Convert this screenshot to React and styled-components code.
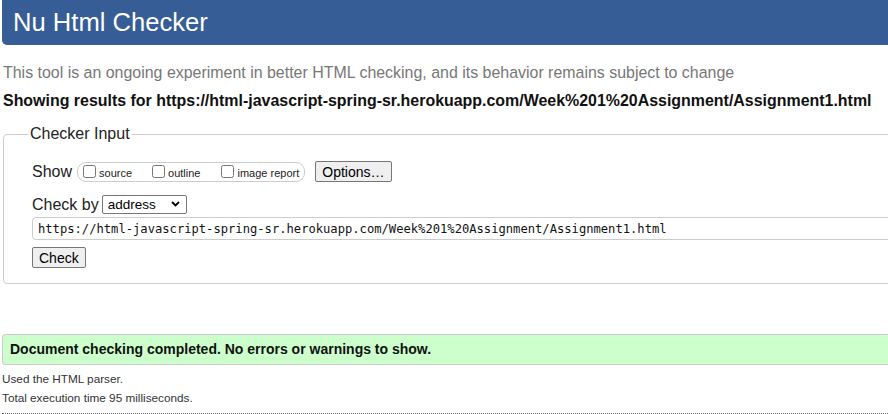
import styled, { createGlobalStyle } from 'styled-components';

const GlobalStyle = createGlobalStyle`
  html, body {
    margin: 0;
    padding: 0;
    background: #fff;
    overflow: hidden;
  }
  body {
    font-family: "Liberation Sans", Arial, sans-serif;
    color: #000;
  }
`;

const Page = styled.div`
  width: 1000px;
  padding-left: 2px;
`;

const Banner = styled.h1`
  margin: 0;
  height: 45px;
  padding-left: 11px;
  background: #365d95;
  color: #fff;
  font-size: 25.6px;
  font-weight: normal;
  line-height: 45px;
  border-radius: 0 0 0 5px;
`;

const Intro = styled.p`
  margin: 18px 0 0 1px;
  color: #777;
  font-size: 15.95px;
  line-height: 20px;
`;

const Results = styled.p`
  margin: 8px 0 0 1px;
  font-size: 15.95px;
  font-weight: bold;
  line-height: 20px;
  color: #111;
`;

const Fieldset = styled.fieldset`
  margin: 14px 0 0 1px;
  padding: 18px 0 15px 28px;
  border: 1px solid #ccc;
  border-radius: 4px;
  min-inline-size: 0;
`;

const Legend = styled.legend`
  margin-left: -4px;
  padding: 0 2px;
  font-size: 16px;
  color: #222;
`;

const Row = styled.div`
  display: flex;
  align-items: center;
  margin-top: ${(p) => p.top || 0}px;
  height: 21px;
`;

const Caption = styled.span`
  font-size: 16px;
  color: #222;
`;

const Group = styled.div`
  display: flex;
  align-items: center;
  height: 18px;
  margin-left: 5px;
  padding: 0 5px;
  border: 1px solid #ccc;
  border-radius: 9px;
`;

const Option = styled.label`
  display: flex;
  align-items: center;
  margin-right: ${(p) => p.space || 0}px;
  font-size: 11px;
  color: #222;

  input {
    width: 13px;
    height: 13px;
    margin: 0 3px 0 0;
  }
  span {
    padding-top: 3px;
  }
`;

const Button = styled.button`
  height: 21px;
  padding: 0 6px;
  background: #efefef;
  border: 1px solid #767676;
  border-radius: 2px;
  font-family: "Liberation Sans", Arial, sans-serif;
  font-size: 14px;
  color: #000;
  margin-left: ${(p) => p.left || 0}px;
`;

const SelectWrap = styled.div`
  position: relative;
  margin-left: 3px;
`;

const Select = styled.select`
  appearance: none;
  width: 85px;
  height: 19px;
  padding: 0 0 0 5px;
  background: #fff;
  border: 1px solid #767676;
  border-radius: 2px;
  font-family: "Liberation Sans", Arial, sans-serif;
  font-size: 13.5px;
  color: #000;
`;

const Chevron = styled.svg`
  position: absolute;
  right: 7px;
  top: 6px;
  pointer-events: none;
`;

const UrlInput = styled.input`
  display: block;
  box-sizing: border-box;
  width: 900px;
  height: 23px;
  margin-top: 2px;
  padding: 0 0 0 5px;
  border: 1px solid #ccc;
  border-radius: 4px;
  font-family: "DejaVu Sans Mono", "Liberation Mono", monospace;
  font-size: 12.15px;
  color: #111;
`;

const Notice = styled.div`
  margin-top: 50px;
  height: 29px;
  padding-left: 7px;
  background: #ccffcc;
  border: 1px solid #ccc;
  border-right: none;
  border-radius: 4px 0 0 4px;
  font-size: 14px;
  font-weight: bold;
  line-height: 29px;
  color: #111;
`;

const Details = styled.div`
  padding-top: 4px;
`;

const Detail = styled.p`
  margin: 0;
  font-size: 11.75px;
  line-height: 19px;
  color: #333;
`;

const Rule = styled.hr`
  margin: 6px 0 0;
  border: none;
  border-top: 1px dotted #666;
`;

export default function App() {
  return (
    <>
      <GlobalStyle />
      <Page>
        <Banner>Nu Html Checker</Banner>
        <Intro>
          This tool is an ongoing experiment in better HTML checking, and its behavior remains subject to change
        </Intro>
        <Results>
          Showing results for https://html-javascript-spring-sr.herokuapp.com/Week%201%20Assignment/Assignment1.html
        </Results>
        <Fieldset>
          <Legend>Checker Input</Legend>
          <Row>
            <Caption>Show</Caption>
            <Group>
              <Option space={20}>
                <input type="checkbox" />
                <span>source</span>
              </Option>
              <Option space={21}>
                <input type="checkbox" />
                <span>outline</span>
              </Option>
              <Option>
                <input type="checkbox" />
                <span>image report</span>
              </Option>
            </Group>
            <Button left={10}>Options…</Button>
          </Row>
          <Row top={12}>
            <Caption>Check by</Caption>
            <SelectWrap>
              <Select defaultValue="address">
                <option value="address">address</option>
                <option value="file">file upload</option>
                <option value="text">text input</option>
              </Select>
              <Chevron width="9" height="6" viewBox="0 0 9 6">
                <path d="M1 1l3.5 3.5L8 1" fill="none" stroke="#000" strokeWidth="1.8" />
              </Chevron>
            </SelectWrap>
          </Row>
          <UrlInput
            readOnly
            value="https://html-javascript-spring-sr.herokuapp.com/Week%201%20Assignment/Assignment1.html"
          />
          <Row top={7}>
            <Button>Check</Button>
          </Row>
        </Fieldset>
        <Notice>Document checking completed. No errors or warnings to show.</Notice>
        <Details>
          <Detail>Used the HTML parser.</Detail>
          <Detail>Total execution time 95 milliseconds.</Detail>
        </Details>
        <Rule />
      </Page>
    </>
  );
}
